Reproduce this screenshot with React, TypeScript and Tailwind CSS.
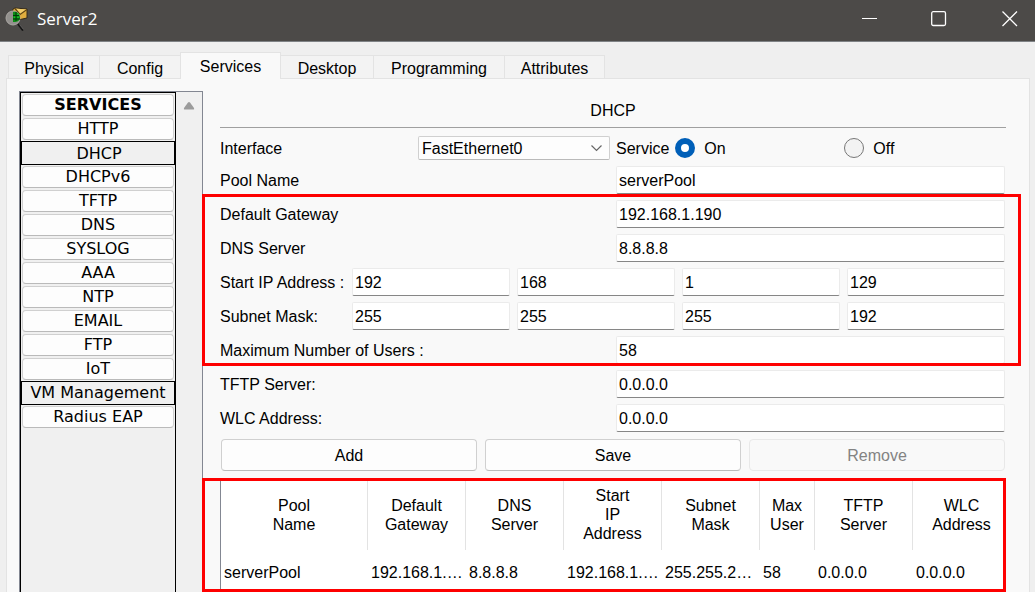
import { useState } from "react";

const tabs = ["Physical", "Config", "Services", "Desktop", "Programming", "Attributes"];

const tabWidths: Record<string, string> = {
  Physical: "w-[92px]",
  Config: "w-[82px]",
  Services: "w-[101px]",
  Desktop: "w-[94px]",
  Programming: "w-[132px]",
  Attributes: "w-[101px]",
};

const services = [
  "SERVICES", "HTTP", "DHCP", "DHCPv6", "TFTP", "DNS", "SYSLOG", "AAA",
  "NTP", "EMAIL", "FTP", "IoT", "VM Management", "Radius EAP",
];

const columns = [
  { lines: ["Pool", "Name"], value: "serverPool", width: "w-[147px]" },
  { lines: ["Default", "Gateway"], value: "192.168.1.…", width: "w-[98px]" },
  { lines: ["DNS", "Server"], value: "8.8.8.8", width: "w-[98px]" },
  { lines: ["Start", "IP", "Address"], value: "192.168.1.…", width: "w-[98px]" },
  { lines: ["Subnet", "Mask"], value: "255.255.2…", width: "w-[98px]" },
  { lines: ["Max", "User"], value: "58", width: "w-[55px]" },
  { lines: ["TFTP", "Server"], value: "0.0.0.0", width: "w-[98px]" },
  { lines: ["WLC", "Address"], value: "0.0.0.0", width: "w-[98px]" },
];

const inputClass =
  "h-7 w-full min-w-0 rounded-[2px] border border-[#ebebeb] border-b-[#868686] bg-white pl-0.5 pt-0.5 text-[16px] leading-5 outline-none";

function AppIcon() {
  return (
    <svg width="24" height="26" viewBox="0 0 24 26" aria-hidden="true">
      <path d="M8 4 10 3 22 4V13L13 15 7 10Z" fill="#e0ad3e" stroke="#33291a" />
      <path d="M10 3.500 21.500 4.500 15 9Z" fill="#f2cd6b" />
      <path d="M10 3.500 15 9.500 22 4.500" fill="none" stroke="#5f4515" strokeWidth="1.200" />
      <circle cx="8" cy="13" r="7" fill="#93918e" stroke="#aaa7a3" />
      <path d="M8 7C12 6 15 9 15 13C14 17 11 17 8 17Z" fill="#0b8d14" />
      <path d="M11 7V16M8 10.500H14M8 14H15" stroke="#02370a" strokeWidth="1" />
      <path d="M13 8.500V10M9.500 11.500V13M13 11.500V13" stroke="#19c52b" strokeWidth="1.500" />
      <path d="M13 19 18 25.500" stroke="#151515" strokeWidth="2" />
      <path d="M14.500 19.500 18.500 24.500" stroke="#777" strokeWidth="0.600" />
    </svg>
  );
}

function Field({ id, label, value }: { id: string; label: string; value: string }) {
  return (
    <div className="grid grid-cols-[396px_1fr] items-center">
      <label htmlFor={id}>{label}</label>
      <input id={id} className={inputClass} defaultValue={value} />
    </div>
  );
}

function OctetField({ id, label, values }: { id: string; label: string; values: string[] }) {
  return (
    <div className="grid grid-cols-[125px_repeat(4,1fr)] items-center gap-x-[7px]">
      <label htmlFor={`${id}-0`} className="whitespace-nowrap">{label}</label>
      {values.map((v, i) => (
        <input
          key={i}
          id={`${id}-${i}`}
          aria-label={`${label} ${i + 1}`}
          className={inputClass}
          defaultValue={v}
        />
      ))}
    </div>
  );
}

function TitleBar() {
  return (
    <header className="flex h-[42px] shrink-0 items-center border-b border-[#7f8285] bg-[#4c4a48] pl-[5px] text-white">
      <div className="pb-1.5">
        <AppIcon />
      </div>
      <h1 className="ml-2 flex-1 pb-1 font-['Open_Sans',sans-serif] text-[17px] leading-6">Server2</h1>
      <div className="flex h-full items-center pb-1 pr-[17px]">
        <button aria-label="Minimize" className="mr-[53px]">
          <svg width="16" height="16" viewBox="0 0 16 16" className="block">
            <path d="M0 7.500H15" stroke="white" />
          </svg>
        </button>
        <button aria-label="Maximize" className="mr-[55px]">
          <svg width="16" height="16" viewBox="0 0 16 16" className="block">
            <rect x="0.700" y="0.700" width="13.800" height="13.800" rx="1.500" fill="none" stroke="white" strokeWidth="1.300" />
          </svg>
        </button>
        <button aria-label="Close">
          <svg width="16" height="16" viewBox="0 0 16 16" className="block">
            <path d="M0.500 0.500 15 15M15 0.500 0.500 15" stroke="white" strokeWidth="1.300" />
          </svg>
        </button>
      </div>
    </header>
  );
}

function Sidebar({ selected, onSelect }: { selected: string; onSelect: (s: string) => void }) {
  return (
    <aside className="mt-3 flex w-[184px] shrink-0 border border-b-0 border-[#838792] bg-[#f0f0f0]">
      <nav className="w-[156px] border border-b-0 border-black font-['DejaVu_Sans',sans-serif] text-[16px] leading-5">
        {services.map((s) => {
          const pressed = s === selected;
          const outlined = pressed || s === "VM Management";
          return (
            <div key={s} className={outlined ? "h-6" : "h-6 p-px"}>
              <button
                onClick={() => onSelect(s)}
                className={
                  "flex h-full w-full items-center justify-center whitespace-nowrap border " +
                  (outlined
                    ? "border-black bg-[#f0f0f0] "
                    : "rounded-[4px] border-[#d0d0d0] border-b-[#bababa] bg-[#fdfdfd] ") +
                  (pressed ? "pl-0.5 pt-0.5 " : "") +
                  (s === "SERVICES" ? "font-bold" : "")
                }
              >
                {s}
              </button>
            </div>
          );
        })}
      </nav>
      <div className="flex flex-1 justify-center pt-[9px]">
        <svg width="12" height="10" viewBox="0 0 12 10" aria-hidden="true">
          <path d="M5 1.500Q6 0.500 7 1.500L11 7Q11.500 8.500 10.500 8.500H1.500Q0.500 8.500 1 7Z" fill="#9b9b9b" />
        </svg>
      </div>
    </aside>
  );
}

export default function App() {
  const [tab, setTab] = useState("Services");
  const [service, setService] = useState("DHCP");

  return (
    <div className="flex h-screen flex-col overflow-hidden bg-[#efefef] font-['Liberation_Sans',Arial,sans-serif] text-[16px] leading-[19px] text-black">
      <TitleBar />
      <div role="tablist" className="mt-2.5 flex items-end pl-2">
        {tabs.map((t) => (
          <button
            key={t}
            role="tab"
            aria-selected={t === tab}
            onClick={() => setTab(t)}
            className={
              tabWidths[t] +
              " -mr-px border border-b-0 border-[#e3e3e3] " +
              (t === tab ? "relative -mb-px h-[27px] bg-[#f9f9f9]" : "h-[23px] bg-[#f3f3f3] pt-0.5")
            }
          >
            {t}
          </button>
        ))}
      </div>
      <div className="ml-1.5 mr-[5px] flex min-h-0 flex-1 border border-b-0 border-[#e3e3e3] bg-[#f9f9f9] pl-3">
        <Sidebar selected={service} onSelect={setService} />
        <main className="flex min-w-0 flex-1 flex-col pl-[17px] pr-[23px]">
          <h2 className="border-b border-[#a0a0a0] pb-[7px] pt-[22px] text-center">DHCP</h2>
          <form className="mt-2 flex flex-col gap-1.5 pr-px" onSubmit={(e) => e.preventDefault()}>
            <div className="grid grid-cols-[198px_198px_1fr] items-center">
              <label htmlFor="interface">Interface</label>
              <div className="relative mr-1.5">
                <select
                  id="interface"
                  className="block h-6 w-full appearance-none rounded-[2px] border border-[#d0d0d0] border-b-[#bababa] bg-[#fdfdfd] pl-[3px] pt-px leading-5 outline-none"
                >
                  <option>FastEthernet0</option>
                </select>
                <svg className="pointer-events-none absolute right-[7px] top-2" width="13" height="8" viewBox="0 0 13 8" aria-hidden="true">
                  <path d="M1.500 1.500 6.500 6.500 11.500 1.500" fill="none" stroke="#666" strokeWidth="1.200" />
                </svg>
              </div>
              <fieldset className="flex items-center">
                <span>Service</span>
                <label className="ml-1.5 flex w-[169px] items-center gap-[9px]">
                  <input
                    type="radio"
                    name="service"
                    defaultChecked
                    className="size-5 appearance-none rounded-full border border-[#777] bg-[#f3f3f3] checked:border-[6px] checked:border-[#005fb8] checked:bg-white"
                  />
                  On
                </label>
                <label className="flex items-center gap-[9px]">
                  <input
                    type="radio"
                    name="service"
                    className="size-5 appearance-none rounded-full border border-[#777] bg-[#f3f3f3] checked:border-[6px] checked:border-[#005fb8] checked:bg-white"
                  />
                  Off
                </label>
              </fieldset>
            </div>
            <Field id="pool" label="Pool Name" value="serverPool" />
            <div className="relative flex flex-col gap-1.5">
              <Field id="gateway" label="Default Gateway" value="192.168.1.190" />
              <Field id="dns" label="DNS Server" value="8.8.8.8" />
              <OctetField id="start" label="Start IP Address :" values={["192", "168", "1", "129"]} />
              <OctetField id="mask" label="Subnet Mask:" values={["255", "255", "255", "192"]} />
              <Field id="users" label="Maximum Number of Users :" value="58" />
              <div className="pointer-events-none absolute -bottom-0.5 -left-[18px] -right-4 -top-1.5 border-[3px] border-[#fe0000]" />
            </div>
            <Field id="tftp" label="TFTP Server:" value="0.0.0.0" />
            <Field id="wlc" label="WLC Address:" value="0.0.0.0" />
            <div className="grid grid-cols-3 gap-2 pl-px pt-px">
              <button className="h-8 rounded-[4px] border border-[#d0d0d0] border-b-[#bababa] bg-[#fdfdfd]">Add</button>
              <button className="h-8 rounded-[4px] border border-[#d0d0d0] border-b-[#bababa] bg-[#fdfdfd]">Save</button>
              <button disabled className="h-8 rounded-[4px] border border-[#e8e8e8] bg-[#f9f9f9] text-[#838383]">Remove</button>
            </div>
          </form>
          <section className="relative mt-2 min-h-0 flex-1">
            <div className="h-full overflow-hidden border-l border-[#838792] bg-white">
              <table className="w-[790px] min-w-full table-fixed border-separate border-spacing-0">
                <thead>
                  <tr>
                    {columns.map((c) => (
                      <th
                        key={c.lines.join(" ")}
                        className={c.width + " h-[71px] border-r border-[#e3e3e3] p-0 text-center align-middle font-normal"}
                      >
                        {c.lines.map((l) => (
                          <span key={l} className="block">{l}</span>
                        ))}
                      </th>
                    ))}
                  </tr>
                </thead>
                <tbody>
                  <tr>
                    {columns.map((c) => (
                      <td key={c.lines.join(" ")} className="h-[45px] whitespace-nowrap py-0 pl-[3px] pr-0">
                        {c.value}
                      </td>
                    ))}
                  </tr>
                </tbody>
              </table>
            </div>
            <div className="pointer-events-none absolute -left-[18px] -top-px bottom-0 right-0 border-[3px] border-[#fe0000]" />
          </section>
        </main>
      </div>
    </div>
  );
}
